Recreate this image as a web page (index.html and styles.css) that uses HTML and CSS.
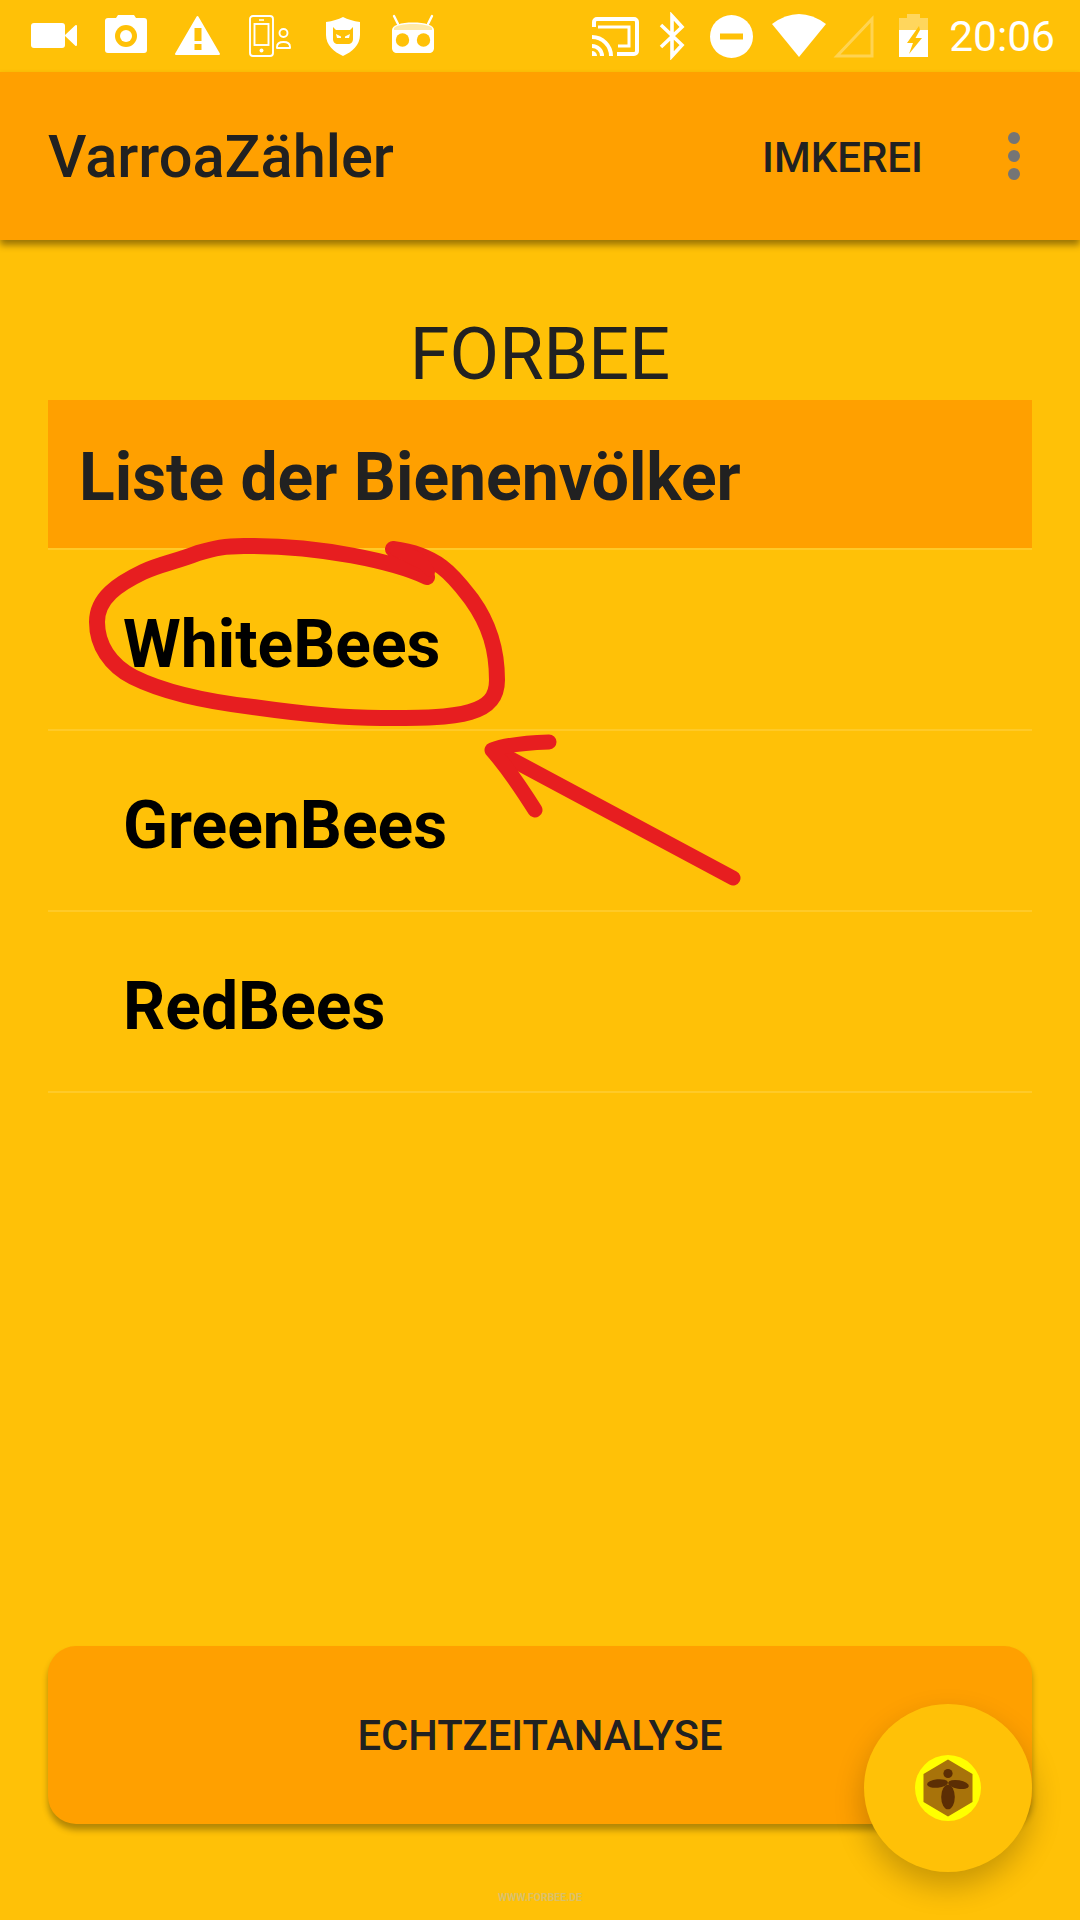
FILE: index.html
```html
<!DOCTYPE html>
<html lang="de">
<head>
    <meta charset="UTF-8">
    <meta name="viewport" content="width=device-width, initial-scale=1.0">
    <title>VarroaZähler</title>
    <link rel="stylesheet" href="styles.css">
</head>
<body>

    <!-- Status bar -->
    <div class="status-bar">
        <div class="status-left">
            <svg class="slot" viewBox="0 0 48 48"><rect x="2" y="11" width="34" height="25" rx="3" fill="#fff"/><path d="M37 23.5 47 14V33Z" fill="#fff" stroke="#fff" stroke-width="2" stroke-linejoin="round"/></svg>
            <svg class="slot" viewBox="0 0 48 48"><path d="M7 6H15L17 3H33L35 6H43A3 3 0 0 1 46 9V38A3 3 0 0 1 43 41H7A3 3 0 0 1 4 38V9A3 3 0 0 1 7 6Z" fill="#fff"/><circle cx="25" cy="24" r="11" fill="#ffc107"/><circle cx="25" cy="24" r="6" fill="#fff"/></svg>
            <svg class="slot" viewBox="0 0 48 48"><path d="M24.5 5 46 42H3Z" fill="#fff" stroke="#fff" stroke-width="2" stroke-linejoin="round"/><rect x="21.5" y="16" width="7" height="13" fill="#ffc107"/><rect x="21.5" y="32" width="7" height="6" fill="#ffc107"/></svg>
            <svg class="slot" viewBox="0 0 48 48"><g fill="none" stroke="#fff" stroke-width="1.9"><rect x="5" y="4" width="23" height="40" rx="3"/><rect x="9.5" y="12" width="14" height="21"/><path d="M14 8H19" stroke-width="1.5"/><circle cx="38.5" cy="21" r="4"/><path d="M32 36V35C32 31.500 35 30 38.5 30S45 31.500 45 35V36Z" stroke-linejoin="round"/></g><circle cx="16.5" cy="38.5" r="2" fill="#fff"/></svg>
            <svg class="slot shield" viewBox="0 0 48 48"><path d="M7 10C14 9 19 7.500 24 5C29 7.500 34 9 41 10V23C41 33 33 40 24 44C15 40 7 33 7 23Z" fill="#fff"/><path d="M14 15 17 18H31L34 15V27C34 30 32 32 29 32H19C16 32 14 30 14 27Z" fill="#ffc107"/><path d="M17 22 22 24.500V26H18ZM31 22 26 24.500V26H30Z" fill="#fff"/></svg>
            <svg class="slot" viewBox="0 0 48 48"><path d="M5 4 9 12M43 4 39 12" stroke="#fff" stroke-width="2.4" stroke-linecap="round"/><path d="M3 18C3 13 12 10.500 24 10.500S45 13 45 18V36C45 39 43 41 40 41H8C5 41 3 39 3 36Z" fill="#fff"/><path d="M5 16C8 13 15 12 24 12S40 13 43 16V18H5Z" fill="#ffe9a8"/><circle cx="13.500" cy="28" r="6.700" fill="#ffc107"/><circle cx="34.500" cy="28" r="6.700" fill="#ffc107"/></svg>
        </div>
        <div class="status-right">
            <svg class="icon-cast" viewBox="0 0 47 48"><g fill="none" stroke="#fff" stroke-width="4"><path d="M2 15V10A3 3 0 0 1 5 7H42A3 3 0 0 1 45 10V39A3 3 0 0 1 42 42H25"/><path d="M6 15H37V34H26" stroke-width="3"/><path d="M0 25A19 19 0 0 1 19 44M0 34A10 10 0 0 1 10 44"/></g><path d="M0 39A5 5 0 0 1 5 44H0Z" fill="#fff"/></svg>
            <svg class="icon-bt" viewBox="0 0 26 48"><path d="M2 13 23 33 13 44V4L23 15 2 35" fill="none" stroke="#fff" stroke-width="3.600"/></svg>
            <svg class="icon-dnd" viewBox="0 0 43 48"><circle cx="21.500" cy="24.500" r="21.500" fill="#fff"/><rect x="10" y="21.500" width="23" height="6" fill="#ffc107"/></svg>
            <svg class="icon-wifi" viewBox="0 0 54 48"><path d="M0 12Q27 -8 54 12L27 45Z" fill="#fff"/></svg>
            <svg class="icon-signal" viewBox="0 0 41 48"><path d="M4 44 39 7V44Z" fill="none" stroke="#fff" stroke-opacity=".3" stroke-width="3"/></svg>
            <svg class="icon-battery" viewBox="0 0 29 48"><path d="M8 2H21V6H29V18H0V6H8Z" fill="#fff" fill-opacity=".35"/><rect y="18" width="29" height="27" fill="#fff"/><path d="M20 14 8 31H14L10 42 23 26H16.500L21 18Z" fill="#ffc107"/></svg>
            <span class="clock">20:06</span>
        </div>
    </div>

    <!-- App bar -->
    <div class="app-bar">
        <div class="app-title">VarroaZähler</div>
        <div class="app-action">IMKEREI</div>
        <div class="overflow-menu"><span></span><span></span><span></span></div>
    </div>

    <!-- Main content -->
    <div class="main-container">
        <h1 class="org-name">FORBEE</h1>
        <div class="list-header">Liste der Bienenvölker</div>
        <ul class="hive-list">
            <li>WhiteBees</li>
            <li>GreenBees</li>
            <li>RedBees</li>
        </ul>
        <div class="analyse-button">ECHTZEITANALYSE</div>
        <div class="watermark">WWW.FORBEE.DE</div>
    </div>

    <!-- Floating button -->
    <div class="fab">
        <svg viewBox="0 0 66 66" width="66" height="66">
            <circle cx="33" cy="33" r="33" fill="#ffff00"/>
            <path d="M33 4.500 57.500 19V47L33 61.500 8.500 47V19Z" fill="#a8730a"/>
            <g fill="#5c2e04">
                <circle cx="33" cy="18.500" r="4.600"/>
                <ellipse cx="22.500" cy="28.500" rx="10.500" ry="4.200" transform="rotate(-6 22.500 28.500)"/>
                <ellipse cx="43.500" cy="29.500" rx="10.500" ry="4.200" transform="rotate(10 43.500 29.500)"/>
                <ellipse cx="33" cy="42" rx="6.800" ry="12.300"/>
            </g>
        </svg>
    </div>

    <!-- Red pen annotation drawn over the screenshot -->
    <svg class="annotation" viewBox="0 0 1080 1920" width="1080" height="1920">
        <g fill="none" stroke="#e71e20" stroke-width="16" stroke-linecap="round" stroke-linejoin="round">
            <path d="M427 577C395 562 320 545 244 546C225 546 215 548 198 553C175 562 160 564 143 572C118 584 97 598 97 622C97 645 110 665 133 677C165 693 210 702 253 707C295 713 340 718 381 718C420 718 450 718 470 712C488 707 497 698 497 680C497 650 490 625 472 600C455 578 440 555 393 549"/>
            <path d="M423 565 395 551 396 548C415 552 425 562 430 572Z" stroke-width="10"/>
            <path d="M733 878 494 750" stroke-width="15"/>
            <path d="M549 742C520 743 505 745 492 750C505 765 518 783 535 810" stroke-width="15"/>
        </g>
    </svg>

</body>
</html>
```

FILE: styles.css
```css
* {
    box-sizing: border-box;
    margin: 0;
    padding: 0;
}
body {
    width: 1080px;
    height: 1920px;
    position: relative;
    overflow: hidden;
    display: flex;
    flex-direction: column;
    font-family: Roboto, "Liberation Sans", sans-serif;
    background-color: #ffc107;
    color: #212121;
}

/* Status bar */
.status-bar {
    height: 72px;
    flex-shrink: 0;
    display: flex;
    justify-content: space-between;
    align-items: center;
    padding: 0 25px 0 29px;
}
.status-left {
    display: flex;
    gap: 24px;
}
.status-right {
    display: flex;
    align-items: center;
}
.status-bar svg {
    height: 48px;
    display: block;
}
.slot {
    width: 48px;
}
.shield {
    margin-left: 2px;
    margin-right: -2px;
}
.icon-cast {
    width: 47px;
}
.icon-bt {
    width: 26px;
    margin-left: 20px;
}
.icon-dnd {
    width: 43px;
    margin-left: 25px;
}
.icon-wifi {
    width: 54px;
    margin-left: 19px;
}
.icon-signal {
    width: 41px;
    margin-left: 7px;
}
.icon-battery {
    width: 29px;
    margin-left: 25px;
}
.clock {
    margin-left: 21px;
    font-size: 42.5px;
    color: white;
}

/* App bar */
.app-bar {
    height: 168px;
    flex-shrink: 0;
    display: flex;
    align-items: center;
    padding: 2px 60px 0 48px;
    background-color: #ffa000;
    box-shadow: 0 5px 7px rgba(0, 0, 0, 0.4);
    position: relative;
}
.app-title {
    flex-grow: 1;
    font-size: 59.6px;
    font-weight: 500;
}
.app-action {
    font-size: 42px;
    font-weight: 500;
    margin-right: 85px;
}
.overflow-menu {
    display: flex;
    flex-direction: column;
    gap: 6px;
    margin-top: -2px;
}
.overflow-menu span {
    width: 12px;
    height: 12px;
    border-radius: 50%;
    background-color: #757575;
}

/* Main content */
.main-container {
    flex-grow: 1;
    display: flex;
    flex-direction: column;
    padding: 0 48px;
}
.org-name {
    height: 160px;
    padding-top: 70px;
    text-align: center;
    font-size: 72px;
    line-height: 90px;
    font-weight: 400;
}
.list-header {
    height: 148px;
    display: flex;
    align-items: center;
    padding: 6px 0 0 31px;
    background-color: #ffa000;
    font-size: 66px;
    font-weight: 700;
}
.hive-list {
    list-style-type: none;
    flex-grow: 1;
    border-top: 2px solid #ffca28;
}
.hive-list li {
    height: 181px;
    display: flex;
    align-items: center;
    padding: 10px 0 0 75px;
    border-bottom: 2px solid #ffca28;
    font-size: 66px;
    font-weight: 700;
    color: black;
}
.analyse-button {
    height: 178px;
    flex-shrink: 0;
    display: flex;
    justify-content: center;
    align-items: center;
    background-color: #ffa000;
    border-radius: 28px;
    box-shadow: 0 6px 6px rgba(0, 0, 0, 0.3);
    font-size: 41.7px;
    font-weight: 500;
}
.watermark {
    height: 96px;
    flex-shrink: 0;
    padding-top: 69px;
    text-align: center;
    font-size: 10.5px;
    line-height: 10px;
    font-weight: 700;
    color: #d9c06a;
}

/* Things that lie over the page */
.fab {
    position: absolute;
    left: 864px;
    top: 1704px;
    width: 168px;
    height: 168px;
    display: flex;
    justify-content: center;
    align-items: center;
    border-radius: 50%;
    background-color: #ffc107;
    box-shadow: 0 14px 30px rgba(0, 0, 0, 0.22);
}
.annotation {
    position: absolute;
    left: 0;
    top: 0;
    pointer-events: none;
}
```
